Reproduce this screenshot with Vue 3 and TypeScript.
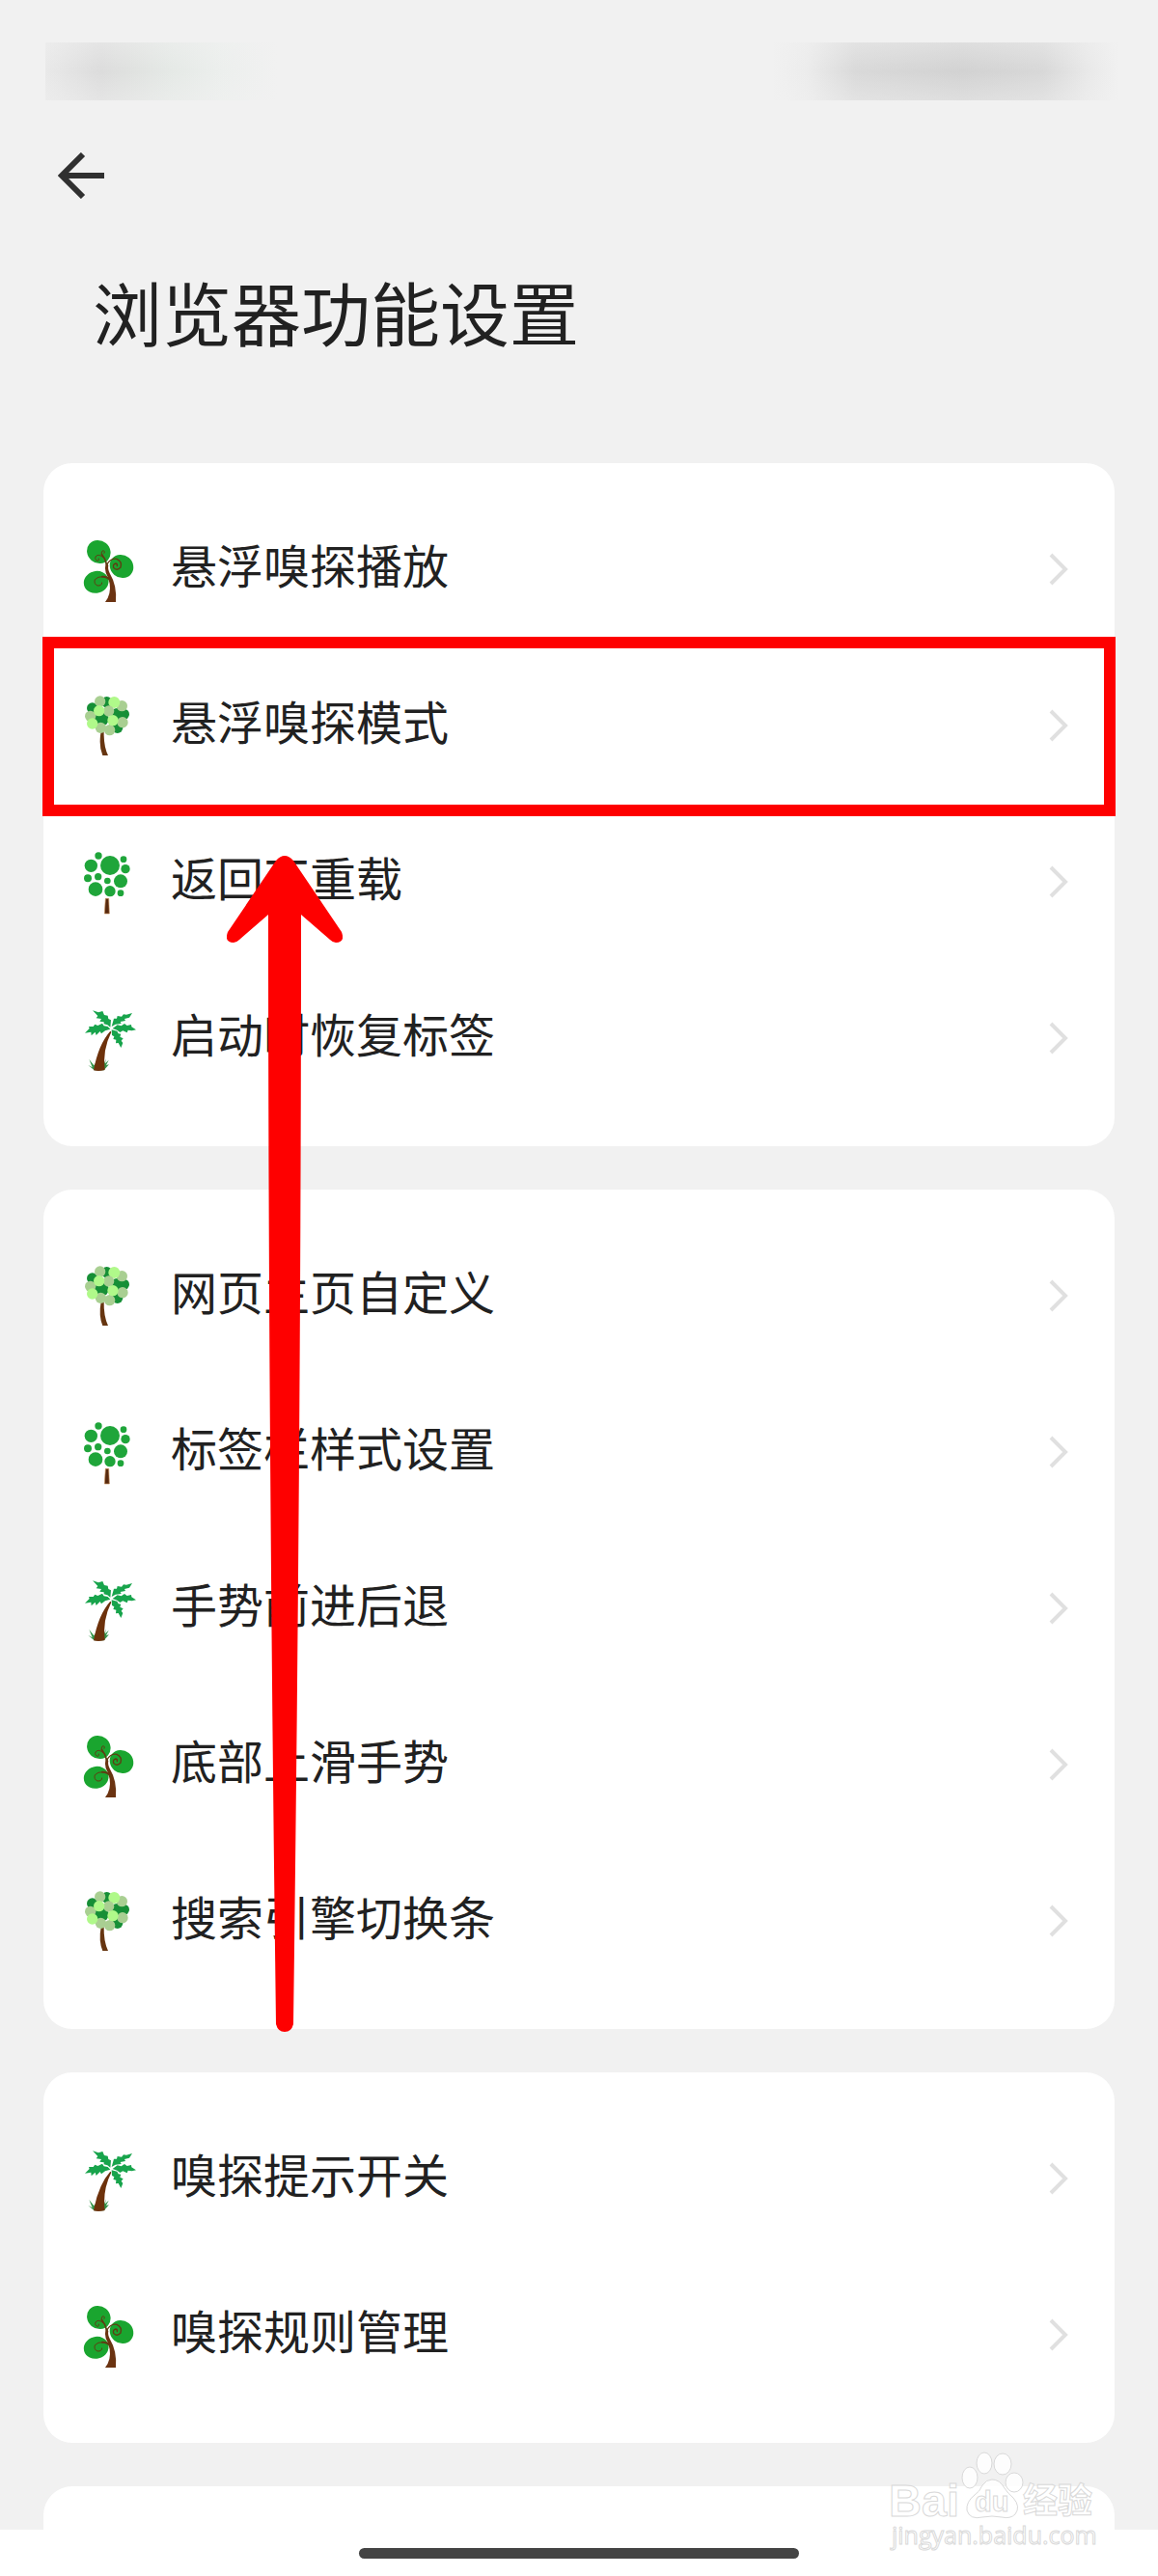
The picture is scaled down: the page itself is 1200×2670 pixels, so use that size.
<script setup lang="ts">
type Tree = 'curly' | 'leafy' | 'dotted' | 'palm'

interface Item {
  label: string
  tree: Tree
  highlighted?: boolean
}

interface Circle {
  x: number
  y: number
  r: number
  fill: string
}

const groups: Item[][] = [
  [
    { label: '悬浮嗅探播放', tree: 'curly' },
    { label: '悬浮嗅探模式', tree: 'leafy', highlighted: true },
    { label: '返回不重载', tree: 'dotted' },
    { label: '启动时恢复标签', tree: 'palm' },
  ],
  [
    { label: '网页主页自定义', tree: 'leafy' },
    { label: '标签栏样式设置', tree: 'dotted' },
    { label: '手势前进后退', tree: 'palm' },
    { label: '底部上滑手势', tree: 'curly' },
    { label: '搜索引擎切换条', tree: 'leafy' },
  ],
  [
    { label: '嗅探提示开关', tree: 'palm' },
    { label: '嗅探规则管理', tree: 'curly' },
  ],
]

const viewBoxes: Record<Tree, string> = {
  curly: '72 75 180 216',
  leafy: '72 81 180 216',
  dotted: '72 72 180 216',
  palm: '72 63 180 216',
}

const dark = '#168f36'
const sage = '#a9cf92'
const lime = '#b0f98a'

const leaves: Circle[] = [
  { x: 107, y: 132, r: 17, fill: dark },
  { x: 152, y: 113, r: 17, fill: dark },
  { x: 136, y: 166, r: 22, fill: dark },
  { x: 184, y: 152, r: 20, fill: dark },
  { x: 205, y: 151, r: 17, fill: dark },
  { x: 185, y: 193, r: 17, fill: dark },
  { x: 199, y: 125, r: 17, fill: sage },
  { x: 131, y: 111, r: 17, fill: sage },
  { x: 175, y: 114, r: 18, fill: lime },
  { x: 158, y: 141, r: 17, fill: sage },
  { x: 101, y: 157, r: 17, fill: sage },
  { x: 128, y: 140, r: 17, fill: lime },
  { x: 133, y: 193, r: 17, fill: sage },
  { x: 107, y: 180, r: 17, fill: lime },
  { x: 161, y: 200, r: 17, fill: sage },
  { x: 201, y: 176, r: 17, fill: sage },
  { x: 171, y: 170, r: 17, fill: lime },
]

const green = '#1fa53a'
const dots: Circle[] = [
  { x: 126, y: 96, r: 11, fill: green },
  { x: 162, y: 126, r: 30, fill: green },
  { x: 204, y: 107, r: 10, fill: green },
  { x: 103, y: 127, r: 20, fill: green },
  { x: 210, y: 137, r: 14, fill: green },
  { x: 93, y: 166, r: 12, fill: green },
  { x: 125, y: 161, r: 11, fill: green },
  { x: 154, y: 174, r: 10, fill: green },
  { x: 195, y: 175, r: 21, fill: green },
  { x: 117, y: 200, r: 22, fill: green },
  { x: 162, y: 206, r: 17, fill: green },
  { x: 195, y: 212, r: 10, fill: green },
]
</script>

<template>
  <div class="page">
    <div class="status">
      <span class="smudge smudge-left"></span>
      <span class="smudge smudge-right"></span>
    </div>

    <header class="header">
      <button class="back" type="button" aria-label="返回">
        <svg width="48" height="48" viewBox="0 0 48 48">
          <path d="M26 2 4 24l22 22M4 24h44" fill="none" stroke="#303030" stroke-width="6" />
        </svg>
      </button>
      <h1 class="title">浏览器功能设置</h1>
    </header>

    <main class="groups">
      <ul v-for="(group, g) in groups" :key="g" class="card">
        <li v-for="item in group" :key="item.label">
          <a href="#" class="row" :class="{ highlighted: item.highlighted }">
            <svg class="tree" :viewBox="viewBoxes[item.tree]" aria-hidden="true">
              <g v-if="item.tree === 'curly'">
                <ellipse cx="127" cy="126" rx="38" ry="35" transform="rotate(40 127 126)" fill="#1aa52f" />
                <ellipse cx="198" cy="171" rx="38" ry="35" transform="rotate(40 198 171)" fill="#1aa52f" />
                <ellipse cx="119" cy="220" rx="39" ry="34" transform="rotate(-15 119 220)" fill="#1aa52f" />
                <path d="M147 282Q166 258 161 225Q159 208 149 191Q145 177 149 158L157 168Q154 180 162 194Q184 230 180 282Z" fill="#6b3311" />
                <g fill="none" stroke="#5f3d12" stroke-linecap="round">
                  <path d="M152 166Q148 148 136 133" stroke-width="5" />
                  <path d="M141 143Q126 130 117 141Q114 152 124 154Q129 153 127 147M137 136Q133 123 142 122Q147 124 144 130" stroke-width="3" />
                  <path d="M152 166Q164 144 183 148Q201 157 195 174Q183 187 173 175Q170 164 180 162Q186 164 184 170" stroke-width="4" />
                  <path d="M140 203Q124 202 115 212Q111 226 123 231Q137 232 137 222" stroke-width="3" />
                  <path d="M163 215Q154 202 138 203" stroke-width="6" />
                </g>
              </g>
              <g v-else-if="item.tree === 'leafy'">
                <path d="M134 205Q126 248 139 279H156Q142 250 143 205Z" fill="#663510" />
                <circle v-for="(c, i) in leaves" :key="i" :cx="c.x" :cy="c.y" :r="c.r" :fill="c.fill" />
              </g>
              <g v-else-if="item.tree === 'dotted'">
                <path d="M148 229h10l2 47h-15z" fill="#57290e" stroke="#c9935f" stroke-width="2" />
                <circle v-for="(c, i) in dots" :key="i" :cx="c.x" :cy="c.y" :r="c.r" :fill="c.fill" />
              </g>
              <g v-else>
                <path d="M108 82 126 88 139 84 144 96 155 98 157 108 165 112 163 134 154 127 143 124 143 118 130 116 135 108 119 106 124 99Z" fill="#18a44c" />
                <path d="M231 90 213 95 204 94 198 101 185 99 183 107 174 107 167 132 179 125 197 123 194 117 210 114 207 108 222 104Z" fill="#18a44c" />
                <path d="M84 152 98 138 96 132 110 132 115 125 124 129 138 122 143 130 155 132 163 140 147 145 135 154 131 147 119 159 116 149 104 160 103 149Z" fill="#18a44c" />
                <path d="M243 142 229 133 228 126 215 129 207 123 197 130 185 127 170 138 184 143 193 150 202 145 215 151 218 143 230 145Z" fill="#18a44c" />
                <path d="M167 142 184 146 188 154 196 155 193 164 203 169 197 176 202 183 196 198 188 183 180 184 181 173 172 171 175 163 168 159Z" fill="#18a44c" />
                <path d="M113 268 94 252 107 259 97 234 112 253 120 242 137 268ZM137 268 149 232 147 247 158 236 150 252 159 250 143 268Z" fill="#35964b" />
                <path d="M163 146Q126 187 111 268Q127 272 146 267Q138 205 166 149Z" fill="#6d310b" />
              </g>
            </svg>
            <span class="label">{{ item.label }}</span>
            <svg class="chevron" viewBox="0 0 24 36" aria-hidden="true">
              <path d="M5 2 20 17 5 32" fill="none" stroke="#e0e0e0" stroke-width="4" />
            </svg>
          </a>
        </li>
      </ul>
      <div class="card card-peek"></div>

      <svg class="pointer" width="120" height="1220" viewBox="0 0 120 1220" aria-hidden="true">
        <path
          d="M51 5Q60-5 69 5L119 79Q123 90 113 90Q110 90 107 87L77 61Q77 600 69 1211Q67 1219 60 1219Q53 1219 51 1211Q43 600 43 61L13 87Q10 90 7 90Q-3 90 1 79Z"
          fill="#fe0000"
        />
      </svg>
    </main>

    <footer class="navbar">
      <span class="handle"></span>
      <svg class="watermark" width="224" height="112" viewBox="0 0 224 112">
        <g fill="#fff" fill-opacity="0.85" stroke="#d9d9d9" stroke-width="1">
          <ellipse cx="87" cy="32" rx="8" ry="11" />
          <ellipse cx="102" cy="17" rx="8" ry="11" />
          <ellipse cx="121" cy="18" rx="9" ry="11" />
          <ellipse cx="133" cy="37" rx="9" ry="10" />
          <path d="M110 34Q118 34 123 43Q126 48 132 53Q140 62 134 70Q129 75 120 73Q110 71 100 73Q87 76 84 66Q83 57 92 50Q97 47 100 40Q104 34 110 34Z" />
          <g class="brand">
            <text x="3" y="72" font-size="47">Bai</text>
            <text x="92" y="67" font-size="29">du</text>
            <text x="142" y="69" font-size="36">经验</text>
          </g>
          <text class="site" x="6" y="101" font-size="25">jingyan.baidu.com</text>
        </g>
      </svg>
    </footer>
  </div>
</template>

<style>
body {
  margin: 0;
  background: #fff;
}
</style>

<style scoped>
.page {
  display: flex;
  flex-direction: column;
  background: #f1f1f1;
  color: #212121;
  font-family: "Noto Sans CJK SC", sans-serif;
}

.status {
  display: flex;
  justify-content: space-between;
  padding: 44px 40px 0 47px;
}

.smudge {
  height: 60px;
}

.smudge-left {
  width: 240px;
  background:
    linear-gradient(rgba(241, 241, 241, 0.4), rgba(241, 241, 241, 0) 50%, rgba(241, 241, 241, 0.4)),
    linear-gradient(90deg, #e9e9e9, #dcdcdc 24%, #e0e2e0 38%, #e5e9e6 54%, #ecefed 76%, #f1f1f1);
}

.smudge-right {
  width: 360px;
  background:
    linear-gradient(rgba(241, 241, 241, 0.4), rgba(241, 241, 241, 0) 50%, rgba(241, 241, 241, 0.4)),
    linear-gradient(90deg, #f1f1f1, #ececec 10%, #d9d9d9 24%, #d2d2d2 55%, #d8d8d8 78%, #e9e9e9 91%, #f1f1f1);
}

.header {
  display: flex;
  flex-direction: column;
  align-items: flex-start;
  gap: 68px;
  padding: 54px 60px 110px;
}

.back {
  display: block;
  height: 48px;
  padding: 0;
  border: 0;
  background: none;
}

.back svg {
  display: block;
}

.title {
  margin: 0 0 0 36px;
  font-size: 72px;
  font-weight: 400;
  line-height: 96px;
}

.groups {
  position: relative;
  display: flex;
  flex-direction: column;
  gap: 45px;
  padding: 0 45px;
}

.card {
  margin: 0;
  padding: 30px 0;
  border-radius: 30px;
  background: #fff;
  list-style: none;
}

.card-peek {
  height: 45px;
  padding: 0;
  border-radius: 30px 30px 0 0;
}

.row {
  position: relative;
  display: flex;
  align-items: center;
  height: 162px;
  padding: 0 47px 0 39px;
  color: inherit;
  text-decoration: none;
}

.highlighted::after {
  content: "";
  position: absolute;
  inset: -12px -1px;
  border: 12px solid #fe0000;
}

.tree {
  width: 60px;
  height: 72px;
}

.label {
  flex: 1;
  margin-left: 33px;
  padding-bottom: 14px;
  font-size: 48px;
  line-height: 64px;
}

.chevron {
  width: 24px;
  height: 36px;
}

.pointer {
  position: absolute;
  top: 407px;
  left: 235px;
}

.navbar {
  position: relative;
  display: flex;
  justify-content: center;
  align-items: center;
  height: 48px;
  background: #fff;
}

.handle {
  width: 38%;
  height: 11px;
  border-radius: 6px;
  background: #444;
}

.watermark {
  position: absolute;
  right: 58px;
  bottom: 22px;
}

.brand {
  font-family: "Liberation Sans", "Noto Sans CJK SC", sans-serif;
  font-weight: 700;
}

.site {
  font-family: "Open Sans", sans-serif;
}
</style>
